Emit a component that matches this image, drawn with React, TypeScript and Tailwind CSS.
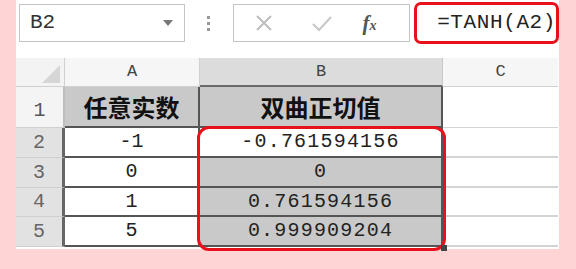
import React from "react";

const mono = { fontFamily: '"Liberation Mono", "Noto Sans CJK SC", monospace' };
const cjk = { fontFamily: '"Noto Sans CJK SC", "Noto Sans", sans-serif' };

export default function App() {
  const rows = [
    { n: "2", a: "-1", b: "-0.761594156", active: true },
    { n: "3", a: "0", b: "0" },
    { n: "4", a: "1", b: "0.761594156" },
    { n: "5", a: "5", b: "0.999909204" },
  ];
  return (
    <div className="w-[576px] h-[269px] bg-[#ffd4d4] pl-[16px] overflow-hidden">
      <div className="w-[543px] h-[249px] bg-white flex flex-col">
        {/* formula bar */}
        <div className="flex items-start h-[58px]">
          <div className="ml-[3px] mt-[4px] w-[166px] h-[38px] border border-[#c4c4c4] flex items-center justify-between pl-[10px] pr-[10px]">
            <span className="text-[21px] text-[#333]" style={mono}>B2</span>
            <svg width="12" height="8" viewBox="0 0 12 8"><path d="M1 1h10L6 7z" fill="#777" /></svg>
          </div>
          <div className="w-[48px] h-[46px] flex flex-col items-center justify-center gap-[3px]">
            <div className="w-[3px] h-[3px] bg-[#999]" />
            <div className="w-[3px] h-[3px] bg-[#999]" />
            <div className="w-[3px] h-[3px] bg-[#999]" />
          </div>
          <div className="mt-[4px] w-[178px] h-[38px] border border-[#c4c4c4] flex items-center">
            <svg className="ml-[21px]" width="18" height="18" viewBox="0 0 18 18"><path d="M2 2L16 16M16 2L2 16" stroke="#bdbdbd" strokeWidth="2" /></svg>
            <svg className="ml-[38px]" width="22" height="18" viewBox="0 0 22 18"><path d="M2 10L8 16L20 3" stroke="#c8c8c8" strokeWidth="2.2" fill="none" /></svg>
            <span className="ml-[30px] text-[21px] italic font-bold text-[#555] leading-none" style={{ fontFamily: '"Liberation Serif", serif' }}>f<span className="text-[14px]">x</span></span>
          </div>
          <div className="ml-[4px] mt-[2px] w-[145px] h-[42px] border-[3px] border-[#e8101a] rounded-[7px] flex items-center pl-[20px]">
            <span className="text-[21px] text-[#222] tracking-[0.6px]" style={mono}>=TANH(A2)</span>
          </div>
        </div>

        {/* grid */}
        <div className="relative">
          <div className="grid grid-cols-[49px_135px_243px_115px] grid-rows-[29px_41px_30px_30px_29px_30px]">
            {/* header row */}
            <div className="bg-[#f3f3f3] border-b border-r border-[#d0d0d0] flex items-end justify-end pr-[4px] pb-[3px]">
              <svg width="18" height="18" viewBox="0 0 18 18"><path d="M18 0V18H0z" fill="#d6d6d6" /></svg>
            </div>
            <div className="bg-[#f6f6f6] border-b border-r border-[#d0d0d0] flex items-center justify-center text-[17px] text-[#444]" style={mono}>A</div>
            <div className="bg-[#dcdcdc] border-b-2 border-b-[#6a6a6a] border-r border-[#c8c8c8] flex items-center justify-center text-[17px] text-[#444]" style={mono}>B</div>
            <div className="bg-[#f6f6f6] border-b border-[#d0d0d0] flex items-center justify-center text-[17px] text-[#444]" style={mono}>C</div>

            {/* row 1 */}
            <div className="bg-[#f4f4f4] border-b border-r-2 border-[#d0d0d0] border-r-[#bdbdbd] flex items-end justify-center pb-[1px] text-[20px] text-[#555]" style={mono}>1</div>
            <div className="bg-[#c9c9c9] border-b-2 border-r-2 border-[#555] flex items-center justify-center text-[24px] font-bold text-[#111]" style={cjk}>任意实数</div>
            <div className="bg-[#c9c9c9] border-b-2 border-r-2 border-[#555] flex items-center justify-center text-[24px] font-bold text-[#111]" style={cjk}>双曲正切值</div>
            <div className="border-b border-[#d4d4d4]" />

            {rows.map((r) => (
              <React.Fragment key={r.n}>
                <div className="bg-[#e2e2e2] border-b border-[#cfcfcf] border-r-[3px] border-r-[#666] flex items-center justify-center text-[20px] text-[#666]" style={mono}>{r.n}</div>
                <div className="bg-white border-b-2 border-r-2 border-[#555] flex items-center justify-center text-[20px] text-[#222]" style={mono}>{r.a}</div>
                <div className={`${r.active ? "bg-white" : "bg-[#c9c9c9]"} border-b-2 border-r-2 border-[#555] flex items-center justify-center text-[20px] text-[#222] tracking-[1.2px]`} style={mono}>{r.b}</div>
                <div className="border-b-2 border-[#d4d4d4]" />
              </React.Fragment>
            ))}
          </div>
          {/* annotation box */}
          <div className="absolute left-[181px] top-[68px] w-[249px] h-[125px] border-[3px] border-[#e8101a] rounded-[12px]" />
          <div className="absolute left-[425px] top-[187px] w-[6px] h-[6px] bg-[#444]" />
        </div>
      </div>
    </div>
  );
}
